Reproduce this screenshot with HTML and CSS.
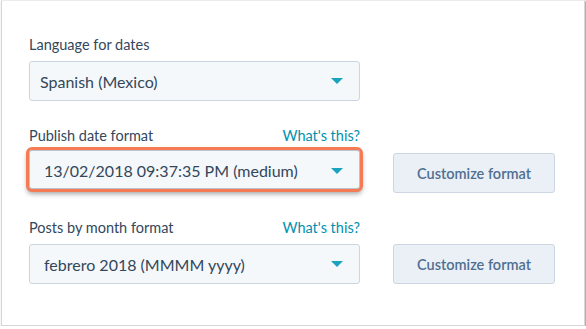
FILE: index.html
```html
<!DOCTYPE html>
<html lang="en">
<head>
    <meta charset="UTF-8">
    <meta name="viewport" content="width=device-width, initial-scale=1.0">
    <title>Blog date settings</title>
    <link rel="stylesheet" href="styles.css">
</head>
<body>
    <!-- Pannello impostazioni date -->
    <div class="pannello">
        <!-- Lingua -->
        <div class="riga">
            <div class="campo">
                <div class="etichetta">
                    <span>Language for dates</span>
                </div>
                <div class="selezione selezione-lingua">
                    <span>Spanish (Mexico)</span>
                    <span class="freccia"></span>
                </div>
            </div>
        </div>
        <!-- Formato data pubblicazione -->
        <div class="riga">
            <div class="campo">
                <div class="etichetta">
                    <span>Publish date format</span>
                    <a href="#">What's this?</a>
                </div>
                <div class="selezione evidenziata">
                    <span>13/02/2018 09:37:35 PM (medium)</span>
                    <span class="freccia"></span>
                </div>
            </div>
            <button class="bottone">Customize format</button>
        </div>
        <!-- Formato post per mese -->
        <div class="riga">
            <div class="campo">
                <div class="etichetta">
                    <span>Posts by month format</span>
                    <a href="#">What's this?</a>
                </div>
                <div class="selezione">
                    <span>febrero 2018 (MMMM yyyy)</span>
                    <span class="freccia"></span>
                </div>
            </div>
            <button class="bottone">Customize format</button>
        </div>
    </div>
</body>
</html>
```

FILE: styles.css
```css
/* Stile globale */
body {
    font-family: Lato, "Open Sans", sans-serif;
    margin: 0;
    padding: 0;
    background-color: white;
    color: #33475b;
}
a {
    text-decoration: none;
    color: #0091ae;
}
.pannello {
    box-sizing: border-box;
    width: 584px;
    height: 326px;
    margin-left: 1px;
    padding: 35px 0 0 27px;
    border: 1px solid #d6d6d6;
    border-top-color: #ebebeb;
    box-shadow: 1px 1px 2px rgba(0, 0, 0, 0.45);
    display: flex;
    flex-direction: column;
    gap: 26px;
}
.riga {
    display: flex;
    align-items: flex-end;
    gap: 33px;
}
.campo {
    width: 331px;
    display: flex;
    flex-direction: column;
    gap: 7px;
}
.etichetta {
    display: flex;
    justify-content: space-between;
    font-size: 14.5px;
    line-height: 18px;
}
.selezione {
    box-sizing: border-box;
    height: 40px;
    padding: 0 14px;
    display: flex;
    align-items: center;
    justify-content: space-between;
    background-color: #f5f8fa;
    border: 1px solid #cbd6e2;
    border-radius: 3px;
    font-size: 16px;
}
.selezione-lingua {
    padding-left: 10px;
}
.evidenziata {
    height: 39px;
    margin-top: -2px;
    margin-bottom: 4px;
    padding-top: 2px;
    border-color: #b9c4cf;
    outline: 3px solid #f57b55;
    box-shadow: 0 3px 5px 2px rgba(0, 0, 0, 0.35);
}
.freccia {
    width: 0;
    height: 0;
    margin-right: 2px;
    border-left: 6px solid transparent;
    border-right: 6px solid transparent;
    border-top: 6px solid #1aa3bd;
}
.bottone {
    box-sizing: border-box;
    width: 162px;
    height: 40px;
    background-color: #eaf0f6;
    border: 1px solid #cbd6e2;
    border-radius: 3px;
    color: #506e91;
    font-family: Lato, "Open Sans", sans-serif;
    font-size: 14.5px;
    font-weight: 600;
}
```
